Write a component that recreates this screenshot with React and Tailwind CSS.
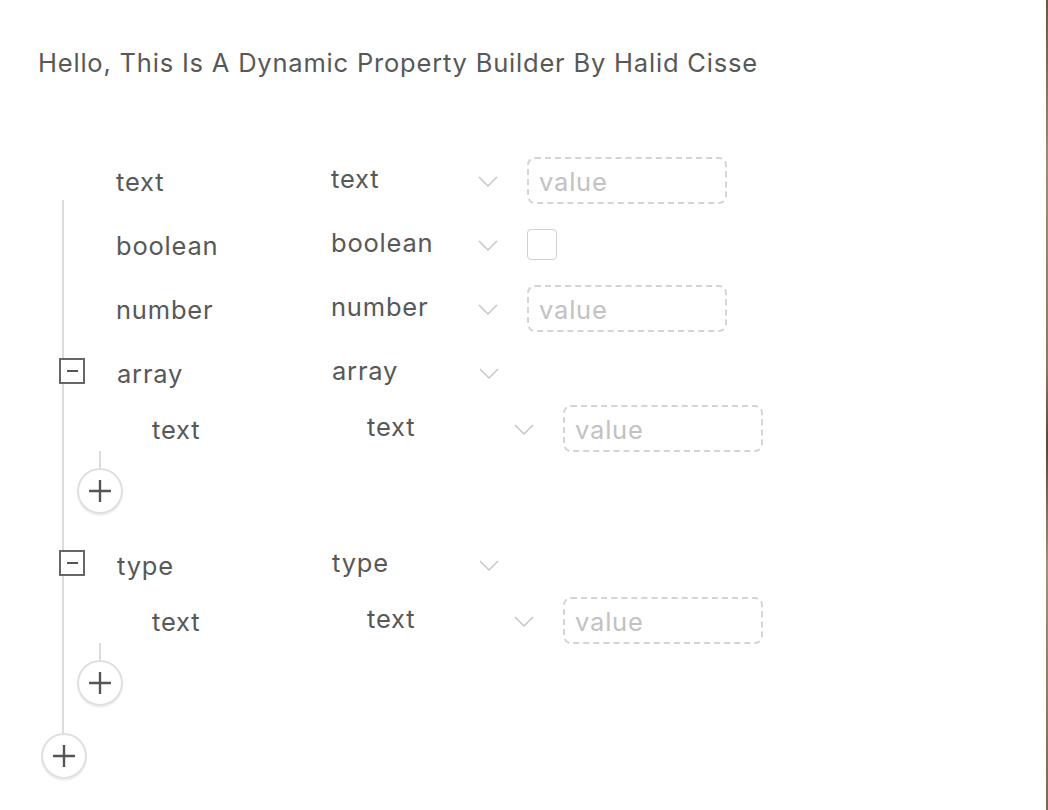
import React from 'react';

const font = { fontFamily: 'Inter, "Noto Sans", sans-serif' };

function Chevron() {
    return (
        <svg width="20" height="11" viewBox="0 0 20 11" className="shrink-0 mt-[3px]">
            <path d="M1 1 L10 10 L19 1" fill="none" stroke="#c4c4c4" strokeWidth="1.4" />
        </svg>
    );
}

function ValueBox({ kind }) {
    if (kind === 'boolean') {
        return <div className="w-[30px] h-[31px] rounded-[4px] border-[1.5px] border-[#d0d0d0] bg-white" />;
    }
    if (kind === 'array' || kind === 'type') return null;
    return (
        <div className="w-[200px] h-[47px] rounded-[8px] border-2 border-dashed border-[#d4d4d4] flex items-center pl-[10px]">
            <span className="text-[25.5px] tracking-[0.8px] text-[#c2c2c2] mt-[4px]">value</span>
        </div>
    );
}

function Row({ label, kind, nested, toggle }) {
    return (
        <div className={`flex items-center h-[46px] tracking-[0.8px] ${nested ? 'pl-[88px]' : toggle ? '' : 'pl-[52px]'}`}>
            {toggle && (
                <div className="ml-[-5px] mr-[32px] w-[26px] h-[26px] border-[2.5px] border-[#666] flex items-center justify-center bg-white mt-[-2px]">
                    <div className="w-[11px] h-[2.5px] bg-[#555]" />
                </div>
            )}
            <span className="w-[215px] shrink-0 text-[25.5px] text-[#585858] mt-[4px]">{label}</span>
            <span className="w-[147px] shrink-0 text-[25.5px] text-[#585858] mb-[2px]">{kind}</span>
            <Chevron />
            <div className="ml-[29px]">
                <ValueBox kind={kind} />
            </div>
        </div>
    );
}

function PlusButton() {
    return (
        <div className="w-[46px] h-[46px] rounded-full border-2 border-[#e0e0e0] bg-white flex items-center justify-center shadow-[0_2px_1px_rgba(0,0,0,0.06)]">
            <svg width="24" height="24" viewBox="0 0 24 24">
                <path d="M12 1 V23 M1 12 H23" stroke="#555" strokeWidth="2.4" />
            </svg>
        </div>
    );
}

function Group({ label, childLabel }) {
    return (
        <div className="flex flex-col">
            <Row label={label} kind={label} toggle />
            <div className="mt-[10px]">
                <Row label={childLabel} kind={childLabel} nested />
            </div>
            <div className="ml-[35px] w-[2px] h-[17px] bg-[#dcdcdc]" />
            <div className="ml-[13px]">
                <PlusButton />
            </div>
        </div>
    );
}

export default function App() {
    return (
        <div className="flex min-h-[810px] w-full bg-white" style={font}>
            <div className="flex-1 flex flex-col">
                <h1 className="pt-[47px] pl-[38px] text-[25.5px] leading-[32px] tracking-[0.8px] text-[#585858] font-normal">
                    Hello, This Is A Dynamic Property Builder By Halid Cisse
                </h1>

                <div className="ml-[62px] mt-[78px] flex flex-col">
                    <div className="pl-[2px]">
                        <Row label="text" kind="text" />
                    </div>
                    <div className="-mt-[3px] pt-[21px] pb-[27px] border-l-2 border-[#dcdcdc] flex flex-col">
                        <div className="mb-[18px]">
                            <Row label="boolean" kind="boolean" />
                        </div>
                        <div className="mb-[18px]">
                            <Row label="number" kind="number" />
                        </div>
                        <div className="mb-[27px]">
                            <Group label="array" childLabel="text" />
                        </div>
                        <Group label="type" childLabel="text" />
                    </div>
                    <div className="ml-[-21px]">
                        <PlusButton />
                    </div>
                </div>
            </div>
            <div className="w-[2px] bg-[linear-gradient(180deg,#6b5440_0%,#a08a74_20%,#8c7762_45%,#5a4636_55%,#a39079_70%,#7d6652_100%)]" />
        </div>
    );
}
